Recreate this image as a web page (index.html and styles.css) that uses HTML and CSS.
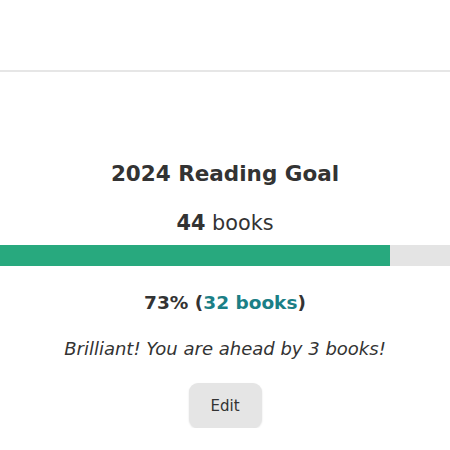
FILE: index.html
```html
<!DOCTYPE html>
<html>
<head>
<meta charset="utf-8">
<link rel="stylesheet" href="styles.css">
</head>
<body>
<header class="topbar"></header>
<main class="goal">
  <h1 class="goal-title">2024 Reading Goal</h1>
  <p class="goal-target"><strong>44</strong> books</p>
  <div class="progress"><div class="progress-fill" style="width: 86.7%"></div></div>
  <p class="goal-percent">73% (<span class="goal-count">32 books</span>)</p>
  <p class="goal-message">Brilliant! You are ahead by 3 books!</p>
  <button class="edit-btn">Edit</button>
</main>
</body>
</html>
```

FILE: styles.css
```css
html, body {
  margin: 0;
  padding: 0;
  background: #fff;
}
body {
  font-family: "DejaVu Sans", "Open Sans", sans-serif;
  color: #333;
  overflow: hidden;
}
.topbar {
  height: 70px;
  border-bottom: 2px solid #e6e6e6;
}
.goal {
  display: flex;
  flex-direction: column;
  align-items: center;
  padding-top: 87px;
}
.goal-title {
  margin: 0;
  font-size: 21.5px;
  font-weight: 600;
  line-height: 30px;
  color: #333;
}
.goal-target {
  margin: 21px 0 0;
  font-size: 20.8px;
  line-height: 26px;
  color: #333;
}
.goal-target strong { font-weight: 600; }
.progress {
  align-self: stretch;
  margin-top: 9px;
  height: 21px;
  background: #e4e4e4;
}
.progress-fill {
  height: 100%;
  background: #28a97e;
}
.goal-percent {
  margin: 24px 0 0;
  font-size: 18.5px;
  line-height: 26px;
  font-weight: 600;
  color: #333;
}
.goal-count { color: #1b7f86; }
.goal-message {
  margin: 21px 0 0;
  font-size: 18px;
  line-height: 24px;
  font-style: italic;
  color: #333;
}
.edit-btn {
  margin-top: 22px;
  width: 73px;
  height: 45px;
  border: none;
  border-radius: 9px;
  background: #e5e5e5;
  box-shadow: 0 1px 2px rgba(0,0,0,0.12);
  font-family: inherit;
  font-size: 15px;
  font-weight: 500;
  color: #333;
}
```
